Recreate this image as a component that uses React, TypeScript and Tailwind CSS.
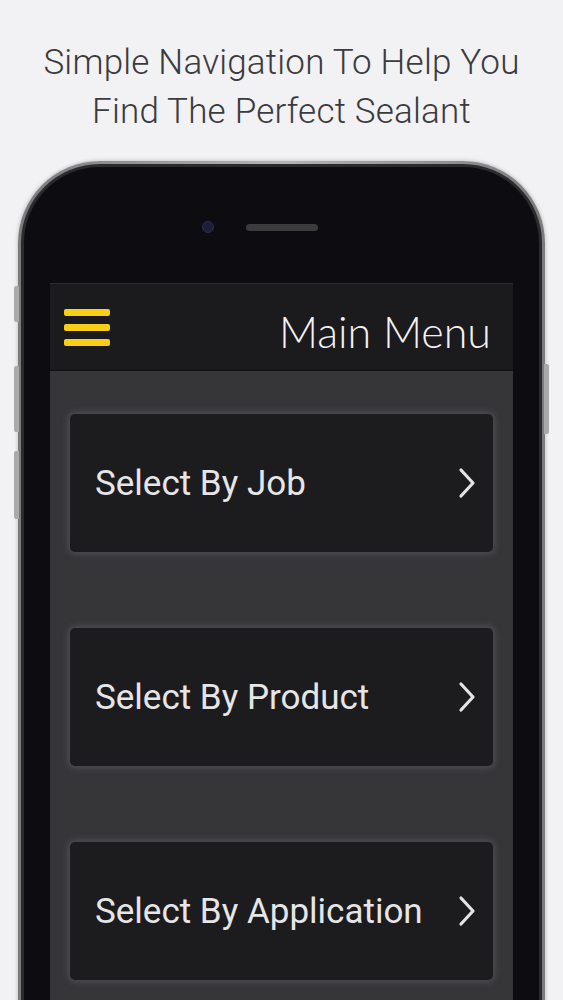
const items = ["Select By Job", "Select By Product", "Select By Application"];

const Chevron = () => (
    <svg width="20" height="32" viewBox="0 0 20 32" fill="none" className="shrink-0">
        <path d="M4 3 L16 16 L4 29" stroke="#e4e4e6" strokeWidth="3.2" strokeLinecap="round" strokeLinejoin="round" />
    </svg>
);

const MenuCard = ({ label }: { label: string }) => (
    <div className="h-[138px] rounded-[5px] bg-[#1c1b1e] flex items-center justify-between pl-[25px] pr-[16px] shadow-[0_0_6px_2px_rgba(110,110,115,0.45)]">
        <span className="text-[35px] text-[#e6e6e8] tracking-[0px] pt-[3px] font-['Roboto',sans-serif]">{label}</span>
        <Chevron />
    </div>
);

export default function App() {
    return <div className="w-[563px] h-[1000px] overflow-hidden bg-[#f2f1f4] font-['Roboto',sans-serif]">
        <h1 className="pt-[38px] text-center text-[35px] leading-[49px] font-light text-[#3b3a3d] tracking-[0.2px]">
            Simple Navigation To Help You<br />Find The Perfect Sealant
        </h1>

        <div className="relative mt-[25px]">
            {/* side buttons */}
            <div className="absolute left-[14px] top-[125px] w-[5px] h-[36px] rounded-l-[2px] bg-[#a9a9ac]" />
            <div className="absolute left-[14px] top-[205px] w-[5px] h-[66px] rounded-l-[2px] bg-[#a9a9ac]" />
            <div className="absolute left-[14px] top-[290px] w-[5px] h-[68px] rounded-l-[2px] bg-[#a9a9ac]" />
            <div className="absolute left-[544px] top-[203px] w-[5px] h-[70px] rounded-r-[2px] bg-[#a9a9ac]" />

            <div className="ml-[18px] w-[527px] h-[900px] rounded-t-[82px] bg-gradient-to-r from-[#7b7b7e] via-[#b4b4b7] to-[#7b7b7e] p-[3px] shadow-[0_0_4px_rgba(0,0,0,0.25)]">
                <div className="h-full rounded-t-[79px] bg-[#2b2b2e] p-[3px]">
                    <div className="h-full rounded-t-[76px] bg-[#0d0c10] px-[26px]">
                        <div className="h-[116px] flex items-center justify-start gap-[32px] pl-[152px] pt-[4px]">
                            <div className="w-[12px] h-[12px] rounded-full bg-[#1d1f3a] border border-[#2c2e4e]" />
                            <div className="w-[72px] h-[7px] rounded-full bg-[#3b3b3e]" />
                        </div>
                        <div className="bg-[#363538] h-[800px] border-t border-[#2a2a2d]">
                            <div className="h-[87px] bg-[#1b1a1d] flex items-center justify-between pl-[14px] pr-[22px] border-b border-[#0f0f11]">
                                <div className="flex flex-col gap-[8px]">
                                    <div className="w-[46px] h-[7px] rounded-[2px] bg-[#f8cf16]" />
                                    <div className="w-[46px] h-[7px] rounded-[2px] bg-[#f8cf16]" />
                                    <div className="w-[46px] h-[7px] rounded-[2px] bg-[#f8cf16]" />
                                </div>
                                <span className="text-[43px] font-light text-[#f2f2f4] font-['Lato',sans-serif] leading-none pt-[8px]">Main Menu</span>
                            </div>
                            <div className="px-[20px] pt-[43px] flex flex-col gap-[76px]">
                                {items.map((it) => <MenuCard key={it} label={it} />)}
                            </div>
                        </div>
                    </div>
                </div>
            </div>
        </div>
    </div>;
}
